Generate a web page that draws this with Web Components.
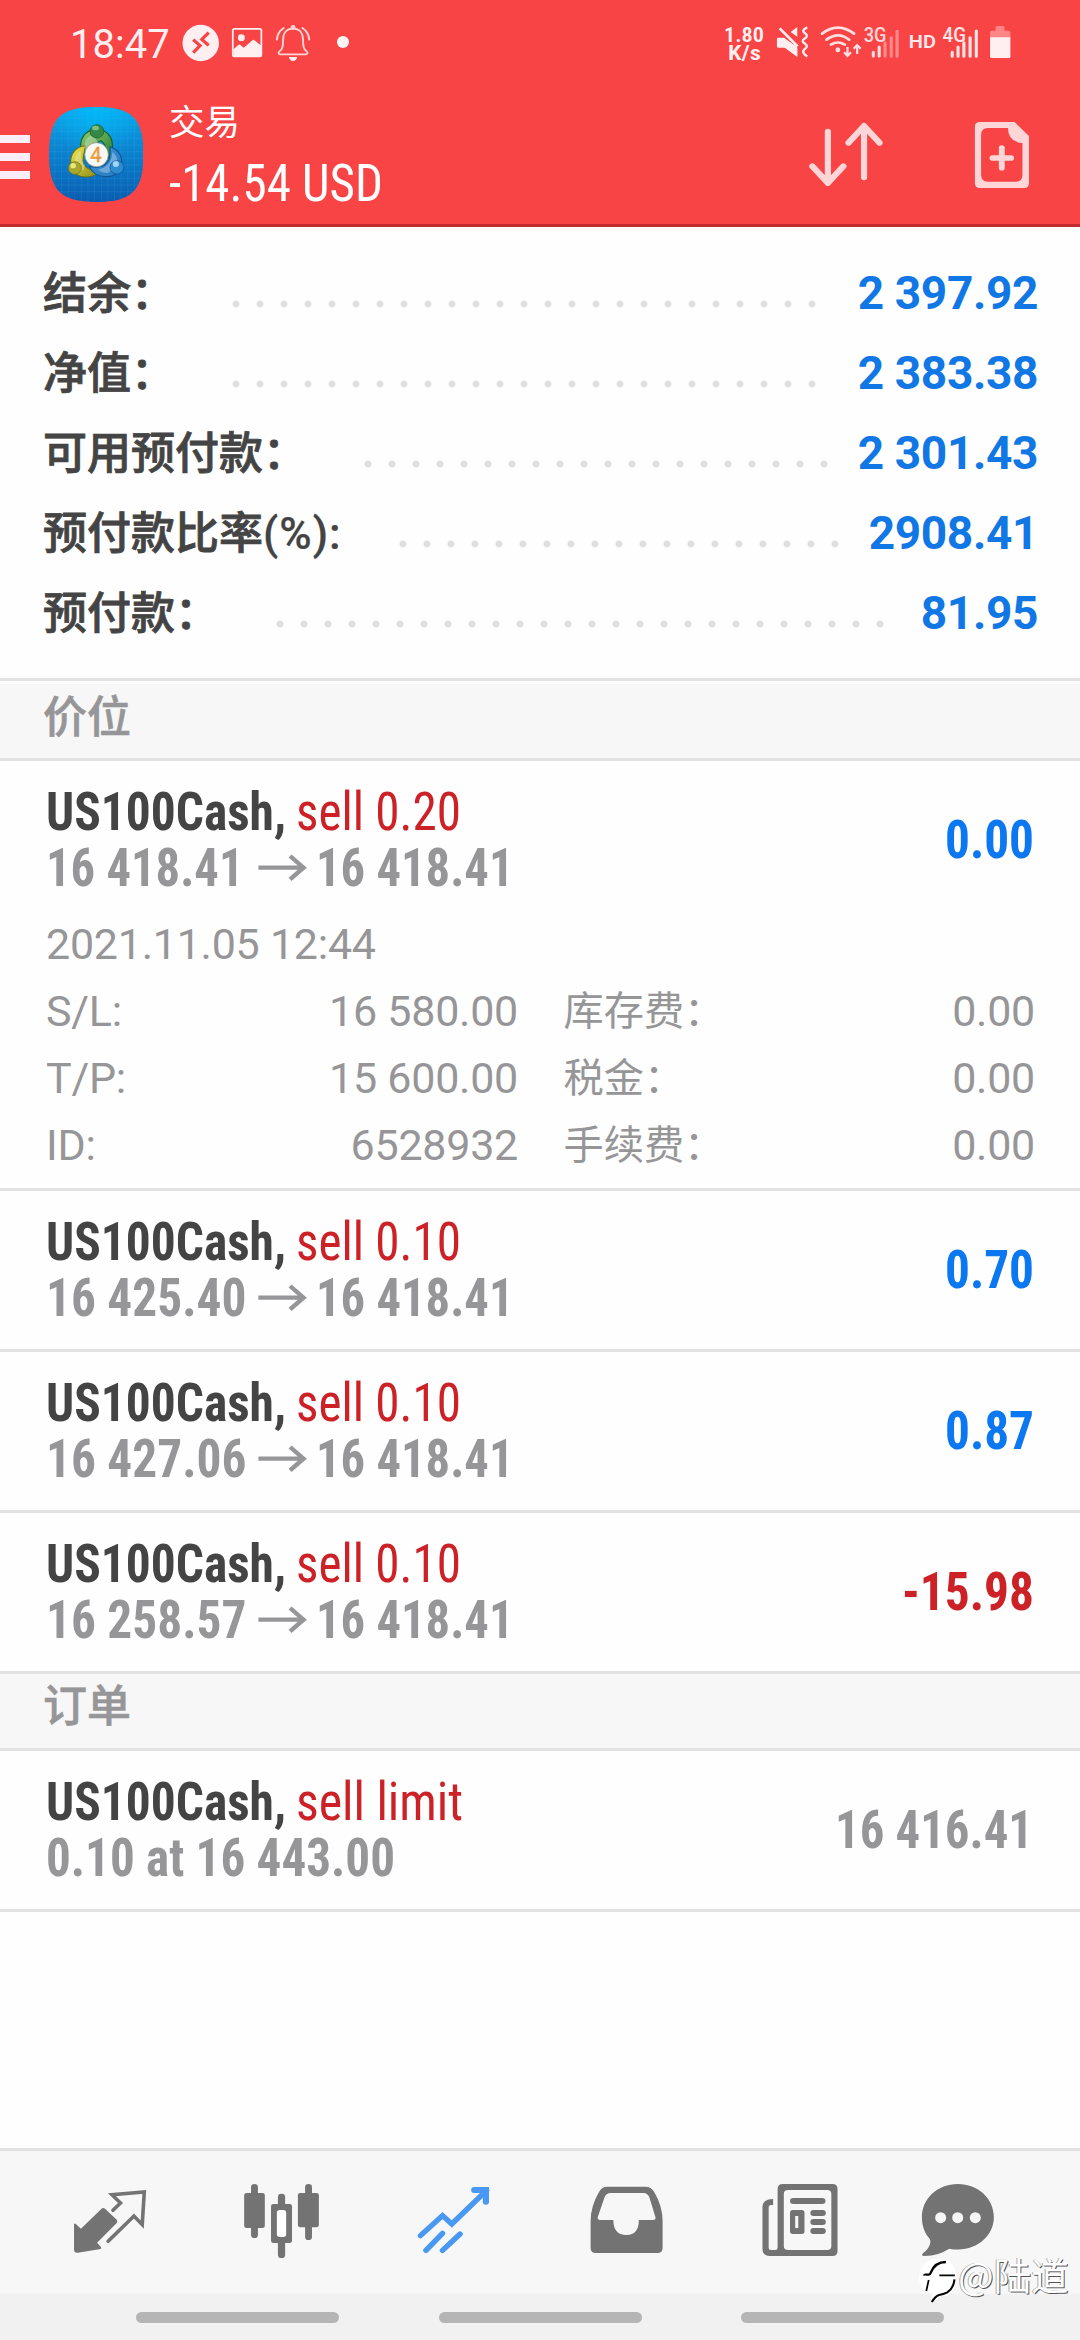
<!DOCTYPE html>
<html lang="zh-CN">
<head>
<meta charset="utf-8">
<title>交易</title>
<style>
html,body{margin:0;padding:0}
body{width:1080px;height:2340px;overflow:hidden;background:#fefefe;font-family:Roboto,"Noto Sans CJK SC",sans-serif;color:#444}
</style>
</head>
<body>
<trade-app></trade-app>
<script>
const define = (name, html, setup) => customElements.define(name, class extends HTMLElement {
  connectedCallback() {
    if (this.shadowRoot) return;
    this.attachShadow({mode: 'open'}).innerHTML = typeof html === 'function' ? html(this) : html;
    if (setup) setup(this);
  }
});

/* Text set in a condensed face and fitted to an exact advance width. */
define('fit-text', el => `<style>:host{display:inline-block;white-space:pre;width:${el.getAttribute('w')}px}
span{display:inline-block;transform-origin:0 50%;font-stretch:75%}</style><span><slot></slot></span>`, el => {
  const s = el.shadowRoot.querySelector('span');
  s.style.transform = `scaleX(${el.getAttribute('w') / s.getBoundingClientRect().width})`;
});

/* Icons: [viewBox, width, height, markup] */
const K = 2.904;
const tile = (x, w, h = 80, y = 0, crop = 0) => `${(x - crop) * K} ${y} ${w * K} ${h * 3}`;
const ICONS = {
  remote: [tile(182, 44), 44, 80, `<ellipse cx="583" cy="129" rx="53" ry="54.500" fill="#ffeff0"/><path d="M561 119l20 18-20 21M606 98l-20 20 20 18" fill="none" stroke="#f94446" stroke-width="9.500"/>`],
  photo: [tile(226, 44), 44, 80, `<rect x="676" y="86.500" width="83" height="82.500" rx="5" fill="none" stroke="#ffeff0" stroke-width="5"/><circle cx="701" cy="113" r="10" fill="#ffeff0"/><path d="M678 148l14-13q3-3 6 0l10 8 25-22q3-3 6 0l20 16v29q0 3-3 3h-75q-3 0-3-3z" fill="#ffeff0"/>`],
  bell: [tile(270, 50), 50, 80, `<g fill="none" stroke="#ffd5d6" stroke-width="5.500" stroke-linecap="round"><path d="M851 86c-20 0-29 14-29 33 0 22-2 28-11 36-4 4-2 8 3 8h74c5 0 7-4 3-8-9-8-11-14-11-36 0-19-9-33-29-33z"/><path d="M824 84c-12 8-19 19-20 35M878 84c12 8 19 19 20 35"/></g><circle cx="851" cy="82" r="7" fill="#ffd5d6"/><path d="M839 171h24q-2 12-12 12t-12-12z" fill="#ffeff0"/>`],
  dot: [tile(320, 50), 50, 80, `<ellipse cx="996" cy="126" rx="17.500" ry="18" fill="#fff5f5"/>`],
  mute: [tile(768, 47, 80, 0, 540), 47, 80, `<g fill="#ffeff0"><path d="M688 117q0-4 4-4h16l39 28v29L712 143h-20q-4 0-4-4z"/><path d="M708 113l39 34v23l-36-27z"/><path d="M728 96l19-15v29z"/></g><path d="M696 85l52 54" stroke="#ffeff0" stroke-width="8"/><path d="M776 82q-18 9-8 16 14 9 0 18-10 7 0 14 14 9 0 18-10 8 8 22" fill="none" stroke="#ffeff0" stroke-width="7"/>`],
  wifi: [tile(815, 48, 80, 0, 540), 48, 80, `<g fill="none" stroke="#ffdfe0" stroke-width="8" stroke-linecap="round"><path d="M819 101q46-36 93 0M832 119q34-26 66 0M845 134q20-13 40 0"/></g><ellipse cx="865" cy="149" rx="7" ry="7.500" fill="#ffdfe0"/><g fill="none" stroke="#ffdfe0" stroke-width="6.500"><path d="M893 141v28M883 157l10 11 10-11M921 162v-28M911 146l10-11 10 11"/></g>`],
  sig3: [tile(863, 41, 80, 0, 540), 41, 80, `<text x="940" y="125" font-size="58" font-weight="500" fill="#ffd8d9" textLength="66" lengthAdjust="spacingAndGlyphs">3G</text><g stroke-width="9" stroke-linecap="round" fill="none"><path d="M968 157v11M985 141v27" stroke="#ffdfe0"/><path d="M1002 128v41M1020 113v56M1037 94v75" stroke="#fd8a8b"/></g>`],
  hd: [tile(904, 37, 80, 0, 540), 37, 80, `<text x="1071" y="145" font-size="56" font-weight="600" fill="#ffe8e9" textLength="79" lengthAdjust="spacingAndGlyphs">HD</text>`],
  sig4: [tile(941, 43, 80, 0, 540), 43, 80, `<text x="1169" y="125" font-size="58" font-weight="500" fill="#ffe4e5" textLength="68" lengthAdjust="spacingAndGlyphs">4G</text><path d="M1197 157v12M1214 141v28M1231 128v41M1249 113v56M1267 93v76" stroke="#ffe4e5" stroke-width="9" stroke-linecap="round"/>`],
  battery: [tile(984, 32, 80, 0, 540), 32, 80, `<path d="M1323 83q0-5 5-5h16q5 0 5 5v9h12q5 0 5 5v17h-59V97q0-5 5-5h11z" fill="#fd8586"/><path d="M1307 112h59v58q0 4-4 4h-51q-4 0-4-4z" fill="#ffeff0"/>`],
  swap: [tile(800, 92, 80, 345, 540), 92, 80, `<path d="M836 395v154M791 499l45 50 45-50M941 532V378M896 428l45-50 45 50" fill="none" stroke="#ffd6d8" stroke-width="18" stroke-linecap="round" stroke-linejoin="round"/>`],
  add: [tile(970, 64, 80, 345, 540), 64, 80, `<path fill-rule="evenodd" fill="#ffd6d8" d="M1277 366h101l42 42v142q0 14-14 14h-129q-14 0-14-14V380q0-14 14-14zM1301 384q-20 0-20 20v121q0 20 20 20h80q20 0 20-20v-96q-42-3-42-45z"/><path d="M1341 444v59M1314 474h54" stroke="#ffd6d8" stroke-width="17" stroke-linecap="round"/>`],
  quotes: [`0 63 522.7 429`, 180, 143, `<path fill="#737373" d="M215 282q2-3 6 1l14 13 59-59q5-5 11-1l34 33q3 5 0 10l-57 59 11 13q4 6-5 7l-62 10q-11 1-11-9z"/><path fill="none" stroke="#737373" stroke-width="10.500" stroke-linejoin="miter" stroke-linecap="round" d="M328 241l22-22-25-25 94-8-6 98-24-26-75 76"/>`],
  chart: [`522.7 63 522.7 429`, 180, 143, `<g fill="#737373"><rect x="709" y="189" width="60" height="105" rx="7"/><rect x="865" y="189" width="61" height="103" rx="7"/><rect x="729" y="162" width="20" height="162" rx="10"/><rect x="886" y="162" width="20" height="168" rx="10"/><rect x="807" y="191" width="21" height="193" rx="10"/><rect x="787" y="222" width="61" height="117" rx="7"/></g><rect x="804" y="240" width="27" height="81" rx="8" fill="#fff"/>`],
  trade: [`1045.4 63 522.7 429`, 180, 143, `<g fill="none" stroke="#4999f2" stroke-linecap="round"><path stroke-width="16" d="M1221 317l64-60 27 25 101-101"/><path stroke-width="16" d="M1237 361l48-51M1285 361l51-49"/><path stroke-width="18" stroke-linejoin="round" d="M1377 180h34v35"/></g><path d="M1404 171h16v20h-16z" fill="#4999f2"/>`],
  history: [`0 63 522.7 429`, 180, 143, `<path fill="#737373" d="M195 170h110q20 0 27 17 24 42 24 86v81q0 15-15 15H162q-15 0-15-15v-81q0-44 24-86 7-17 24-17z"/><path fill="#f7f7f7" d="M205 189h95q13 0 18 14l16 54q5 13-6 13h-41q0 45-36 45-38 0-38-45h-37q-12 0-7-13l18-54q5-14 18-14z"/>`],
  news: [`522.7 63 522.7 429`, 180, 143, `<path fill-rule="evenodd" fill="#737373" d="M705 162h144q15 0 15 15v186q0 15-15 15H667q-21 0-21-21V230q0-23 31-23v18h-6q-7 0-7 7v121q0 7 7 7h12q7 0 7-7V177q0-15 15-15zM720 180q-12 0-12 12v156q0 12 12 12h114q12 0 12-12V192q0-12-12-12z"/><g fill="#737373"><rect x="726" y="204" width="103" height="18" rx="9"/><rect x="785" y="240" width="45" height="18" rx="9"/><rect x="785" y="267" width="45" height="18" rx="9"/><rect x="785" y="294" width="45" height="18" rx="9"/><rect x="726" y="240" width="42" height="72" rx="8"/></g><path d="M741 258h9v36h-9z" fill="#f7f7f7"/>`],
  chat: [`1045.4 63 522.7 429`, 180, 143, `<path fill="#737373" d="M1213 162c59 0 105 43 105 100 0 59-57 109-130 94-20 13-42 21-73 22-6 0-7-4-3-8 18-14 25-32 20-43-15-17-23-38-23-65 0-57 46-100 104-100z"/><g fill="#f7f7f7"><ellipse cx="1163.500" cy="263" rx="16" ry="16.500"/><ellipse cx="1213" cy="263" rx="16" ry="16.500"/><ellipse cx="1264" cy="263" rx="16" ry="16.500"/></g>`],
  arrow: [`745 545 150 90`, 51.65, 30, `<path d="M752 589h128M844 554l39 35-39 35" fill="none" stroke="#969698" stroke-width="13"/>`],
  app: [`141 321 274 285`, 94.4, 95, `<defs><linearGradient id="b" x2="0" y2="1"><stop stop-color="#0ba6ea"/><stop offset="1" stop-color="#0a5cb0"/></linearGradient><radialGradient id="h" cy="0" r=".5"><stop stop-color="#00b8f8"/><stop offset="1" stop-color="#00b8f8" stop-opacity="0"/></radialGradient>
  <linearGradient id="g" x2="1" y2="1"><stop stop-color="#95cc70"/><stop offset="1" stop-color="#217a31"/></linearGradient><linearGradient id="y" x2="1" y2="1"><stop stop-color="#efe84b"/><stop offset="1" stop-color="#8a8a17"/></linearGradient><linearGradient id="u" x2="1" y2="1"><stop stop-color="#3e98db"/><stop offset="1" stop-color="#2478bd"/></linearGradient></defs>
  <path fill="url(#b)" d="M278 321c105 0 137 35 137 142S383 606 278 606 141 570 141 463 173 321 278 321z"/><path fill="url(#h)" d="M278 321c105 0 137 35 137 142S383 606 278 606 141 570 141 463 173 321 278 321z"/>
  <path d="M158 370v190M177 345v240M197 333v263M216 325v276M235 322v282M254 321v285M273 321v285M293 321v285M312 322v283M331 325v278M350 328v270M370 338v253M389 355v212M165 355h226M155 375h246M148 395h261M144 415h268M142 435h272M141 455h274M141 475h274M142 495h272M144 515h268M147 535h262M153 555h249M165 575h226" stroke="#53b6ee" stroke-opacity=".28" stroke-width="1.500"/>
  <g stroke-linejoin="round"><path d="M234 455c-6-35 8-65 46-67 35 3 50 30 44 64-4 18-14 25-20 28 8-28 4-46-13-58z" fill="url(#g)" stroke="#135c22" stroke-width="3"/><path d="M247 437c-29 2-44 25-43 51 2 29 19 43 48 43 19-1 32-9 38-20-26 0-48-3-50-28 0-17 4-30 7-46z" fill="url(#y)" stroke="#6d7113" stroke-width="3"/><path d="M318 440c24 9 36 28 34 52-4 26-21 38-46 38-24-1-41-12-48-31 26 7 50 1 58-23 3-12 3-20 2-36z" fill="url(#u)" stroke="#11508d" stroke-width="3"/><path d="M247 455c-9-30 5-49 24-49l12 22c-18 3-30 12-36 27zM240 512c-21-5-26-20-24-36 2-12 9-20 18-22-1 14 0 31 12 42zM325 456c15 11 18 30 11 45l-24 18c-12 0-23-4-29-10 25-5 40-22 42-53z" fill="#fff" fill-opacity=".3"/></g>
  <circle cx="280" cy="394" r="20" fill="#358744" stroke="#135c22" stroke-width="2"/><ellipse cx="276" cy="384" rx="10" ry="7" fill="#80bc86"/><circle cx="216" cy="504" r="19" fill="#a9a72b" stroke="#6d7113" stroke-width="2"/><circle cx="211" cy="497" r="8" fill="#e8e87e"/><circle cx="338" cy="502" r="20" fill="#2b8cd1" stroke="#11508d" stroke-width="2"/><circle cx="335" cy="492" r="9" fill="#a3d3f0"/>
  <ellipse cx="279" cy="464" rx="34" ry="36" fill="#f7f8f3" stroke="#999a80" stroke-width="2"/><text x="261" y="486" font-size="62" font-weight="400" fill="#f1a040" stroke="#dc8e32" stroke-width="1" textLength="33" lengthAdjust="spacingAndGlyphs">4</text>`],
  knot: [`1090 385 120 145`, 41.3, 48.3, `<path d="M1095 450q4-60 58-60 46 0 51 52 0 50-30 60-25 5-38 18-8-12-1-26-36-6-40-44z" fill="#fff"/><path d="M1112 441q-1-3 3-3h9q4 0 6-6 12-32 44-32" fill="none" stroke="#050505" stroke-width="7"/><path d="M1155 440h45M1124 454l-7 33" fill="none" stroke="#050505" stroke-width="5"/><path d="M1199 452q-3 28-21 39-11 6-24 8-11 4-21 21" fill="none" stroke="#050505" stroke-width="6"/>`]
};
define('ui-icon', el => {
  const [vb, w, h, body] = ICONS[el.getAttribute('name')];
  return `<style>:host{display:block;flex:none;width:${w}px;height:${h}px}svg{display:block;font-family:Roboto,sans-serif}</style><svg width="${w}" height="${h}" viewBox="${vb}" preserveAspectRatio="none">${body}</svg>`;
});

define('status-bar', `<style>:host{display:flex;height:80px;color:#ffeff0}
.time{width:112px;box-sizing:border-box;font-size:40px;line-height:60px;padding-top:14.5px}
.gap{flex:1}.speed{width:48px;display:flex;flex-direction:column;align-items:center;padding-top:26px;font-weight:600;font-size:20.500px;line-height:18px;box-sizing:border-box}
.in{display:flex;flex:1;padding:0 64px 0 70px}</style>
<div class="in"><div class="time">18:47</div><ui-icon name="remote"></ui-icon><ui-icon name="photo"></ui-icon><ui-icon name="bell"></ui-icon><ui-icon name="dot"></ui-icon>
<div class="gap"></div><div class="speed"><fit-text w="40">1.80</fit-text><fit-text w="33">K/s</fit-text></div>
<ui-icon name="mute"></ui-icon><ui-icon name="wifi"></ui-icon><ui-icon name="sig3"></ui-icon><ui-icon name="hd"></ui-icon><ui-icon name="sig4"></ui-icon><ui-icon name="battery"></ui-icon></div>`);

define('app-header', `<style>:host{display:flex;height:144px;color:#fff}
.menu{width:30px;margin:55px 18.5px 0 0;display:flex;flex-direction:column;gap:10px}.menu i{height:8px;background:#faeff8}
ui-icon[name=app]{margin-top:27px}.t{display:flex;flex-direction:column;margin-left:26px;flex:1;padding-top:19px}
.n{font-size:35.500px;line-height:48px}.s{font-size:52px;font-weight:450;line-height:60px;margin-top:6.500px}
ui-icon[name=swap]{margin:35px 78px 0 0}ui-icon[name=add]{margin:35px 46px 0 0}</style>
<div class="menu"><i></i><i></i><i></i></div><ui-icon name="app"></ui-icon>
<div class="t"><div class="n">交易</div><div class="s"><fit-text w="214">-14.54 USD</fit-text></div></div>
<ui-icon name="swap"></ui-icon><ui-icon name="add"></ui-icon>`);

define('account-row', el => `<style>:host{display:flex;align-items:center;height:80px;padding:0 42px 0 43px;line-height:80px;white-space:pre}
.l{font-size:44px;font-weight:500;color:#444;-webkit-text-stroke:.8px #444;margin-top:1px}.d{width:${el.getAttribute('dots') * 24}px;height:8px;margin:21px 0 0 49px;background:radial-gradient(circle at 12px 4px,#dfdfdf 2.900px,transparent 3.900px) 0 0/24px 8px repeat-x}
.v{margin-left:auto;font-size:46px;font-weight:700;letter-spacing:-.35px;color:#1177e5}::slotted(span){letter-spacing:1px;-webkit-text-stroke-width:.2px}</style>
<span class="l"><slot></slot></span><span class="d"></span><span class="v">${el.getAttribute('value')}</span>`);

define('section-title', `<style>:host{display:block;height:77px;box-sizing:border-box;line-height:67px;padding-left:43px;font-size:44px;font-weight:500;color:#969698;-webkit-text-stroke:.6px #969698;background:#f7f7f7;border-bottom:3px solid #e2e2e2}
:host([first]){line-height:68px;height:80px;border-top:3px solid #fdfdfd}</style><slot></slot>`);

define('deal-row', el => {
  const a = n => el.getAttribute(n);
  const line2 = a('from') ? `<fit-text w="${a('fw') || 200.5}">${a('from')}</fit-text><ui-icon name="arrow"></ui-icon><fit-text w="197.5">16 418.41</fit-text>` : `<fit-text w="349">${a('note')}</fit-text>`;
  return `<style>:host{display:block;border-bottom:3px solid #e2e2e2}
.m{display:flex;height:112px;padding:23px 46px 23px 45.500px;align-items:center;justify-content:space-between;font-size:53px;line-height:56px;font-weight:700}
.a,.b{display:flex;height:56px}.a{color:#444}.a .side{color:#cc2227;font-weight:450;margin-left:10.500px}.b{color:#969698}
.b ui-icon{margin:13px 8.500px 0 ${210.6 - (a('fw') || 200.5)}px}.p{color:#0b78f1}.p.neg{color:#cc2227}.p.gray{color:#969698;margin-right:1px}
:host([open]) .m{padding-bottom:0}</style>
<div class="m"><div><div class="a"><fit-text w="240">US100Cash,</fit-text><fit-text class="side" w="${a('sw') || 165}">${a('side')}</fit-text></div><div class="b">${line2}</div></div>
<div class="p ${a('tone') || ''}"><fit-text w="${a('pw') || 89}">${a('profit')}</fit-text></div></div><slot></slot>`;
});

define('deal-details', `<style>:host{display:block;padding:14.500px 45px 9.500px 46px;font-size:43px;letter-spacing:-.25px;line-height:67px;color:#969698}
.g{display:grid;grid-template-columns:150px 322px 45.500px 200px 1fr}.g>*:nth-child(4n+2){text-align:right;grid-column:2}.g>*:nth-child(4n+3){grid-column:4;font-size:40.200px;letter-spacing:0}.g>*:nth-child(4n+4){text-align:right}.g>*{height:67px;white-space:nowrap}</style>
<div>2021.11.05 12:44</div><div class="g"><span>S/L:</span><span>16 580.00</span><span>库存费：</span><span>0.00</span><span>T/P:</span><span>15 600.00</span><span>税金：</span><span>0.00</span><span>ID:</span><span>6528932</span><span>手续费：</span><span>0.00</span></div>`);

define('tab-bar', `<style>:host{display:flex;height:143px;border-top:3px solid #e2e2e2;background:#f7f7f7}</style>
${['quotes', 'chart', 'trade', 'history', 'news', 'chat'].map(n => `<ui-icon name="${n}"></ui-icon>`).join('')}`);

define('gesture-bar', `<style>:host{display:flex;justify-content:center;gap:99.500px;height:46px;padding-top:18px;box-sizing:border-box;background:#f1f1f1}i{width:203px;height:11px;border-radius:6px;background:#b5b5b5}</style><i></i><i></i><i></i>`);

define('author-mark', `<style>:host{position:absolute;left:917px;top:2257px;display:flex;color:#fff;font:37.500px/44px "Noto Sans CJK SC",sans-serif;text-shadow:1px 1px 0 #555,-1px 0 0 #aaa}span{margin-top:-5px;white-space:nowrap}</style><ui-icon name="knot"></ui-icon><span>@陆道</span>`);

define('trade-app', `<style>:host{display:flex;flex-direction:column;height:2340px;position:relative}
header{background:#f94446;border-bottom:3px solid #c32b30}.acc{padding:26px 0 25px;border-bottom:3px solid #e2e2e2}main{flex:1}</style>
<header><status-bar></status-bar><app-header></app-header></header>
<main><div class="acc">
<account-row dots="25" value="2 397.92">结余：</account-row><account-row dots="25" value="2 383.38">净值：</account-row><account-row dots="20" value="2 301.43">可用预付款：</account-row><account-row dots="19" value="2908.41">预付款比率<span>(%):</span></account-row><account-row dots="26" value="81.95">预付款：</account-row></div>
<section-title first>价位</section-title>
<deal-row open side="sell 0.20" from="16 418.41" fw="197.5" profit="0.00"><deal-details></deal-details></deal-row>
<deal-row side="sell 0.10" from="16 425.40" profit="0.70"></deal-row>
<deal-row side="sell 0.10" from="16 427.06" profit="0.87"></deal-row>
<deal-row side="sell 0.10" from="16 258.57" profit="-15.98" pw="132" tone="neg"></deal-row>
<section-title>订单</section-title>
<deal-row side="sell limit" sw="167" note="0.10 at 16 443.00" profit="16 416.41" pw="198" tone="gray"></deal-row></main>
<tab-bar></tab-bar><gesture-bar></gesture-bar><author-mark></author-mark>`);
</script>
</body>
</html>
